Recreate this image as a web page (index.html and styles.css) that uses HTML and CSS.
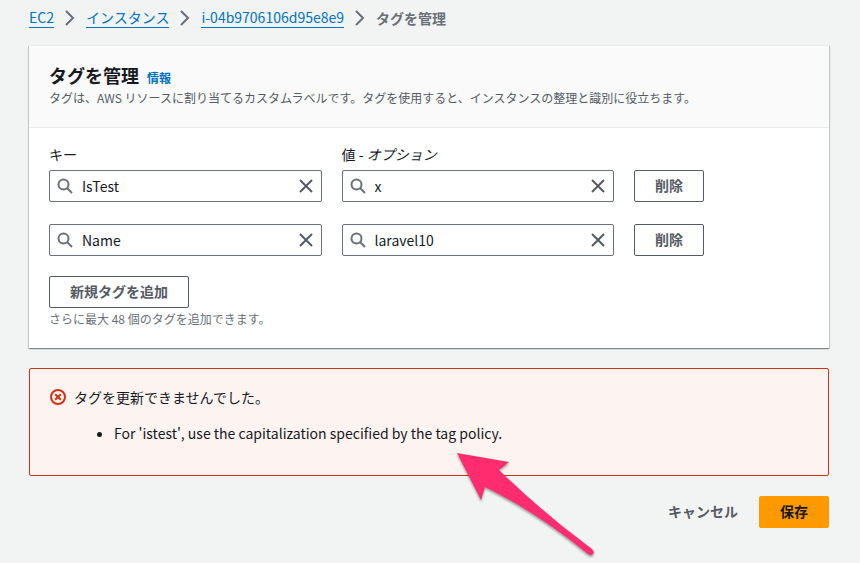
FILE: index.html
```
<!DOCTYPE html>
<html lang="ja">
<head>
  <meta charset="UTF-8">
  <meta name="viewport" content="width=device-width, initial-scale=1">
  <title>タグを管理</title>
  <link rel="stylesheet" href="styles.css">
</head>
<body>
<svg class="sprite" aria-hidden="true">
  <symbol id="icon-search" viewBox="0 0 16 16">
    <circle cx="6.5" cy="6.5" r="5"/>
    <path d="M15 15l-5-5"/>
  </symbol>
  <symbol id="icon-close" viewBox="0 0 16 16">
    <path d="M2 2l12 12M14 2L2 14"/>
  </symbol>
  <symbol id="icon-angle" viewBox="0 0 16 16">
    <path d="M4 1l7 7-7 7"/>
  </symbol>
</svg>
<nav class="breadcrumbs" aria-label="パンくず">
  <a href="#">EC2</a>
  <svg class="icon"><use href="#icon-angle"/></svg>
  <a href="#">インスタンス</a>
  <svg class="icon"><use href="#icon-angle"/></svg>
  <a href="#">i-04b9706106d95e8e9</a>
  <svg class="icon"><use href="#icon-angle"/></svg>
  <span class="current">タグを管理</span>
</nav>
<main>
  <form class="tag-form">
    <section class="panel">
      <header class="panel-header">
        <div class="panel-title">
          <h1>タグを管理</h1>
          <a href="#" class="info">情報</a>
        </div>
        <p class="description">タグは、AWS リソースに割り当てるカスタムラベルです。タグを使用すると、インスタンスの整理と識別に役立ちます。</p>
      </header>
      <div class="panel-body">
        <div class="tag-grid tag-labels">
          <label class="tag-field" for="key1">キー</label>
          <label class="tag-field" for="value1">値 - <i>オプション</i></label>
        </div>
        <div class="tag-grid">
          <div class="tag-field search-box">
            <svg class="icon"><use href="#icon-search"/></svg>
            <input type="text" id="key1" value="IsTest">
            <button type="button" class="clear" aria-label="クリア"><svg class="icon"><use href="#icon-close"/></svg></button>
          </div>
          <div class="tag-field search-box">
            <svg class="icon"><use href="#icon-search"/></svg>
            <input type="text" id="value1" value="x">
            <button type="button" class="clear" aria-label="クリア"><svg class="icon"><use href="#icon-close"/></svg></button>
          </div>
          <div class="tag-action"><button type="button" class="btn">削除</button></div>
        </div>
        <div class="tag-grid">
          <div class="tag-field search-box">
            <svg class="icon"><use href="#icon-search"/></svg>
            <input type="text" id="key2" value="Name" aria-label="キー">
            <button type="button" class="clear" aria-label="クリア"><svg class="icon"><use href="#icon-close"/></svg></button>
          </div>
          <div class="tag-field search-box">
            <svg class="icon"><use href="#icon-search"/></svg>
            <input type="text" id="value2" value="laravel10" aria-label="値">
            <button type="button" class="clear" aria-label="クリア"><svg class="icon"><use href="#icon-close"/></svg></button>
          </div>
          <div class="tag-action"><button type="button" class="btn">削除</button></div>
        </div>
        <div class="tag-add">
          <button type="button" class="btn">新規タグを追加</button>
          <p class="hint">さらに最大 48 個のタグを追加できます。</p>
        </div>
      </div>
    </section>
    <section class="alert" role="alert">
      <div class="alert-title">
        <svg class="icon" viewBox="0 0 16 16">
          <circle cx="8" cy="8" r="7"/>
          <path d="M5.2 5.2l5.6 5.6M10.8 5.2l-5.6 5.6"/>
        </svg>
        <span>タグを更新できませんでした。</span>
      </div>
      <ul>
        <li>For 'istest', use the capitalization specified by the tag policy.</li>
      </ul>
      <!-- エラー内容を指す矢印 -->
      <svg class="arrow" viewBox="0 0 150 110" aria-hidden="true">
        <path d="M7 4L59 13L49 21Q92 63 142 100Q145 103 143 105Q141 107 138 105Q88 64 35 38L31 51Z"/>
      </svg>
    </section>
    <div class="form-actions">
      <button type="button" class="btn btn-link">キャンセル</button>
      <button type="submit" class="btn btn-primary">保存</button>
    </div>
  </form>
</main>
</body>
</html>
```
FILE: styles.css
```
* {
  box-sizing: border-box;
}

body {
  margin: 0;
  min-height: 100vh;
  padding: 8px 31px 20px 29px;
  background: #f2f3f3;
  color: #16191f;
  font-family: "Noto Sans CJK JP", sans-serif;
  font-size: 14px;
  line-height: 22px;
}

h1, p, ul {
  margin: 0;
}

a {
  color: #0073bb;
  text-decoration: none;
}

input, button {
  font: inherit;
}

.sprite {
  display: none;
}

.icon {
  flex: none;
  display: block;
  width: 16px;
  height: 16px;
  fill: none;
  stroke: #687078;
  stroke-width: 2;
}

/* パンくずリスト */
.breadcrumbs {
  display: flex;
  align-items: center;
  gap: 8px;
  height: 20px;
}

.breadcrumbs a {
  line-height: 19px;
  border-bottom: 1px solid #0073bb;
}

.current {
  color: #687078;
  font-weight: 700;
  line-height: 20px;
}

/* パネル */
.panel {
  margin-top: 17px;
  background: #fff;
  border-top: 1px solid #eaeded;
  box-shadow: 0 1px 1px 0 rgba(0, 28, 36, 0.3), 1px 1px 1px 0 rgba(0, 28, 36, 0.15), -1px 1px 1px 0 rgba(0, 28, 36, 0.15);
}

.panel-header {
  padding: 16px 20px 20px;
  background: #fafafa;
  border-bottom: 1px solid #eaeded;
}

.panel-title {
  display: flex;
  align-items: baseline;
  gap: 8px;
}

.panel-title h1 {
  font-size: 18px;
  line-height: 26px;
}

.info {
  font-size: 12px;
  line-height: 18px;
  font-weight: 700;
}

.description {
  margin-top: 1px;
  color: #545b64;
  font-size: 12px;
  line-height: 18px;
}

.panel-body {
  padding: 15px 20px 20px;
}

.tag-grid {
  display: grid;
  grid-template-columns: repeat(8, 1fr);
  column-gap: 20px;
  margin-top: 22px;
}

.tag-grid.tag-labels {
  margin: 0;
}

.tag-labels + .tag-grid {
  margin-top: 5px;
}

.tag-field {
  grid-column: span 3;
}

.tag-action {
  grid-column: span 2;
}

.search-box {
  display: flex;
  align-items: center;
  height: 32px;
  padding: 0 7px;
  border: 1px solid #687078;
  border-radius: 2px;
}

.search-box input {
  flex: 1;
  min-width: 0;
  padding: 0 9px;
  border: 0;
  outline: 0;
  background: none;
  color: #16191f;
}

.clear {
  padding: 0;
  border: 0;
  background: none;
}

.clear .icon {
  stroke: #545b64;
}

.btn {
  display: block;
  height: 32px;
  padding: 0 20px 2px;
  border: 1px solid #545b64;
  border-radius: 2px;
  background: #fff;
  color: #545b64;
  font-weight: 700;
  line-height: 22px;
}

.tag-add {
  margin-top: 20px;
}

.hint {
  margin-top: 2px;
  color: #687078;
  font-size: 12px;
  line-height: 18px;
}

/* エラー */
.alert {
  position: relative;
  margin-top: 20px;
  padding: 17px 20px 31px;
  border: 1px solid #d13212;
  border-radius: 2px;
  background: #fdf3f1;
}

.alert-title {
  display: flex;
  align-items: center;
  gap: 8px;
}

.alert-title .icon {
  stroke: #d13212;
}

.alert ul {
  margin-top: 14px;
  padding-left: 64px;
}

.arrow {
  position: absolute;
  top: 80px;
  left: 420px;
  width: 150px;
  height: 110px;
  fill: #ff2d6f;
  filter: drop-shadow(0 2px 1px rgba(0, 0, 0, 0.35));
  pointer-events: none;
}

.form-actions {
  display: flex;
  justify-content: flex-end;
  margin-top: 20px;
}

.btn-link {
  border-color: transparent;
  background: none;
}

.btn-primary {
  border-color: #ff9900;
  background: #ff9900;
  color: #16191f;
}
```
